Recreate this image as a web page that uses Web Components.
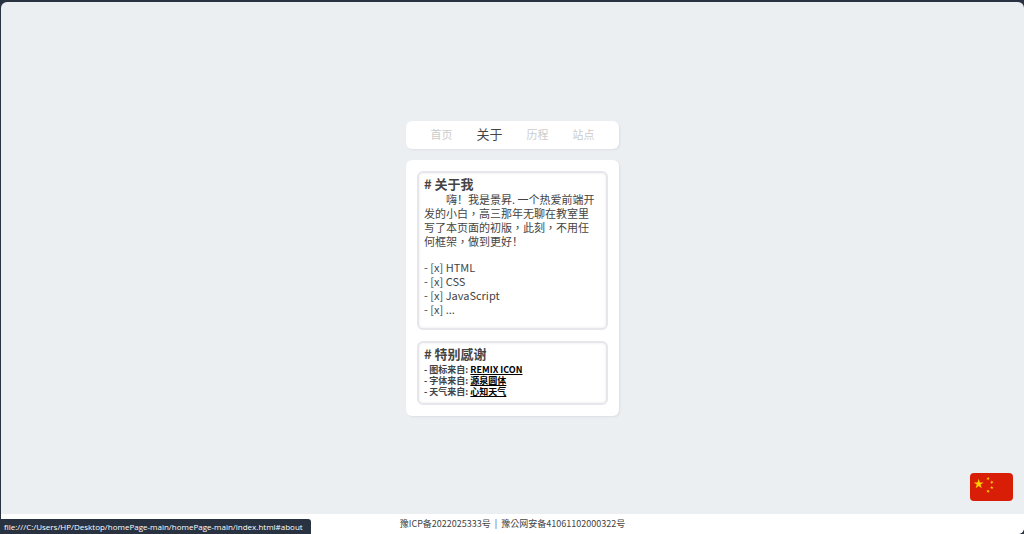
<!DOCTYPE html>
<html lang="zh-TW">
<head>
<meta charset="UTF-8">
<meta name="viewport" content="width=device-width, initial-scale=1.0">
<title>关于</title>
<style>
  body {
    margin: 0;
    background: #293241;
    color: #444;
    font-family: "Noto Sans CJK TC", "Noto Sans CJK SC", sans-serif;
  }
</style>
</head>
<body>
<home-page>
  <nav-bar active="about"></nav-bar>
  <page-card>
    <note-box heading="# 关于我"><about-me></about-me></note-box>
    <note-box heading="# 特别感谢"><thanks-list></thanks-list></note-box>
  </page-card>
  <country-flag slot="overlay"></country-flag>
  <site-footer slot="footer"></site-footer>
  <link-status slot="overlay">file:///C:/Users/HP/Desktop/homePage-main/homePage-main/index.html#about</link-status>
</home-page>

<script>
class HomePage extends HTMLElement {
  constructor() {
    super();
    this.attachShadow({ mode: 'open' }).innerHTML = `
      <style>
        :host {
          display: flex;
          flex-direction: column;
          box-sizing: border-box;
          min-height: 100vh;
          padding: 2px 0 0 1px;
        }
        .window {
          flex: 1;
          display: flex;
          flex-direction: column;
          background: #ebeff2;
          border-radius: 6px;
          overflow: hidden;
        }
        main {
          flex: 1;
          display: flex;
          flex-direction: column;
          align-items: center;
          justify-content: center;
          gap: 11px;
          padding-top: 20px;
        }
      </style>
      <div class="window">
        <main><slot></slot></main>
        <slot name="footer"></slot>
      </div>
      <slot name="overlay"></slot>
    `;
  }
}

class NavBar extends HTMLElement {
  constructor() {
    super();
    this.attachShadow({ mode: 'open' });
  }

  connectedCallback() {
    const items = [
      ['home', '首页'],
      ['about', '关于'],
      ['history', '历程'],
      ['sites', '站点']
    ];
    const active = this.getAttribute('active');
    const links = items.map(([id, text]) =>
      `<a href="#${id}" class="${id === active ? 'active' : ''}">${text}</a>`
    ).join('');

    this.shadowRoot.innerHTML = `
      <style>
        :host {
          display: block;
          width: 100%;
          max-width: 213px;
          background: #fff;
          border-radius: 6px;
          box-shadow: 1px 1px 2px #dcdde3;
        }
        nav {
          display: flex;
          justify-content: center;
          align-items: center;
          gap: 24px;
          padding: 4px 0 6px;
          line-height: 18px;
        }
        a {
          color: #ccc;
          font-size: 11px;
          text-decoration: none;
        }
        a.active {
          color: #444;
          font-size: 13px;
        }
      </style>
      <nav>${links}</nav>
    `;
  }
}

class PageCard extends HTMLElement {
  constructor() {
    super();
    this.attachShadow({ mode: 'open' }).innerHTML = `
      <style>
        :host {
          display: flex;
          flex-direction: column;
          gap: 11px;
          box-sizing: border-box;
          width: 100%;
          max-width: 213px;
          padding: 11px;
          background: #fff;
          border-radius: 6px;
          box-shadow: 1px 1px 2px #dcdde3;
        }
      </style>
      <slot></slot>
    `;
  }
}

class NoteBox extends HTMLElement {
  constructor() {
    super();
    this.attachShadow({ mode: 'open' });
  }

  connectedCallback() {
    this.shadowRoot.innerHTML = `
      <style>
        :host {
          display: block;
          padding: 3px 5px 4px;
          border: 2px solid #e6e6eb;
          border-radius: 6px;
          box-shadow: inset 0 0 3px #e9e9ee;
        }
        h2 {
          margin: 0;
          font-size: 13px;
          line-height: 16px;
        }
      </style>
      <h2>${this.getAttribute('heading')}</h2>
      <slot></slot>
    `;
  }
}

class AboutMe extends HTMLElement {
  constructor() {
    super();
    this.attachShadow({ mode: 'open' }).innerHTML = `
      <style>
        :host {
          display: block;
          padding-bottom: 8px;
          font-size: 11px;
          line-height: 14px;
        }
        p {
          margin: 0 0 12px;
          text-indent: 2em;
          white-space: nowrap;
        }
        .mark {
          font-family: "Noto Sans CJK SC", sans-serif;
        }
        ul {
          margin: 0;
          padding: 0;
          list-style: none;
        }
      </style>
      <p>嗨<span class="mark" lang="zh-CN">！</span>我是景昇. 一个热爱前端开<br>发的小白，高三那年无聊在教室里<br>写了本页面的初版，此刻，不用任<br>何框架，做到更好<span class="mark" lang="zh-CN">！</span></p>
      <ul>
        <li>- [x] HTML</li>
        <li>- [x] CSS</li>
        <li>- [x] JavaScript</li>
        <li>- [x] ...</li>
      </ul>
    `;
  }
}

class ThanksList extends HTMLElement {
  constructor() {
    super();
    this.attachShadow({ mode: 'open' }).innerHTML = `
      <style>
        :host {
          display: block;
          padding: 2px 0;
          font-size: 9px;
          font-weight: bold;
          line-height: 11px;
        }
        ul {
          margin: 0;
          padding: 0;
          list-style: none;
        }
        a {
          color: #000;
        }
      </style>
      <ul>
        <li>- 图标来自: <a href="#remixicon">REMIX ICON</a></li>
        <li>- 字体来自: <a href="#font">源泉圆体</a></li>
        <li>- 天气来自: <a href="#weather">心知天气</a></li>
      </ul>
    `;
  }
}

class CountryFlag extends HTMLElement {
  constructor() {
    super();
    this.attachShadow({ mode: 'open' }).innerHTML = `
      <style>
        :host {
          position: fixed;
          right: 11px;
          bottom: 33px;
          width: 43px;
        }
        svg {
          display: block;
          width: 100%;
          border-radius: 4px;
        }
      </style>
      <svg viewBox="0 0 43 28" aria-hidden="true">
        <defs>
          <path id="star" d="M0-1 .225-.309 .951-.309 .363 .118 .588 .809 0 .382-.588 .809-.363 .118-.951-.309-.225-.309Z"/>
        </defs>
        <rect width="43" height="28" fill="#d81e06"/>
        <g fill="#ffd100">
          <use href="#star" transform="translate(8.7 11) scale(5.2)"/>
          <use href="#star" transform="translate(18 5.6) rotate(20) scale(1.9)"/>
          <use href="#star" transform="translate(21.8 9.3) rotate(-20) scale(1.9)"/>
          <use href="#star" transform="translate(21.8 14.6) scale(1.9)"/>
          <use href="#star" transform="translate(18 18.2) rotate(20) scale(1.9)"/>
        </g>
      </svg>
    `;
  }
}

class SiteFooter extends HTMLElement {
  constructor() {
    super();
    this.attachShadow({ mode: 'open' }).innerHTML = `
      <style>
        :host {
          display: block;
          background: #fff;
          font-size: 9px;
          line-height: 20px;
          text-align: center;
        }
        a {
          color: inherit;
          text-decoration: none;
        }
      </style>
      <footer><a href="#icp">豫ICP备2022025333号</a>&nbsp; | &nbsp;<a href="#police">豫公网安备41061102000322号</a></footer>
    `;
  }
}

class LinkStatus extends HTMLElement {
  constructor() {
    super();
    this.attachShadow({ mode: 'open' }).innerHTML = `
      <style>
        :host {
          position: fixed;
          left: 0;
          bottom: 0;
          padding: 0 8px 0 4px;
          background: #293241;
          border-radius: 0 3px 0 0;
          color: #fff;
          font-family: "Open Sans", "Noto Sans", sans-serif;
          font-size: 8px;
          line-height: 15px;
        }
      </style>
      <slot></slot>
    `;
  }
}

customElements.define('home-page', HomePage);
customElements.define('nav-bar', NavBar);
customElements.define('page-card', PageCard);
customElements.define('note-box', NoteBox);
customElements.define('about-me', AboutMe);
customElements.define('thanks-list', ThanksList);
customElements.define('country-flag', CountryFlag);
customElements.define('site-footer', SiteFooter);
customElements.define('link-status', LinkStatus);
</script>
</body>
</html>
